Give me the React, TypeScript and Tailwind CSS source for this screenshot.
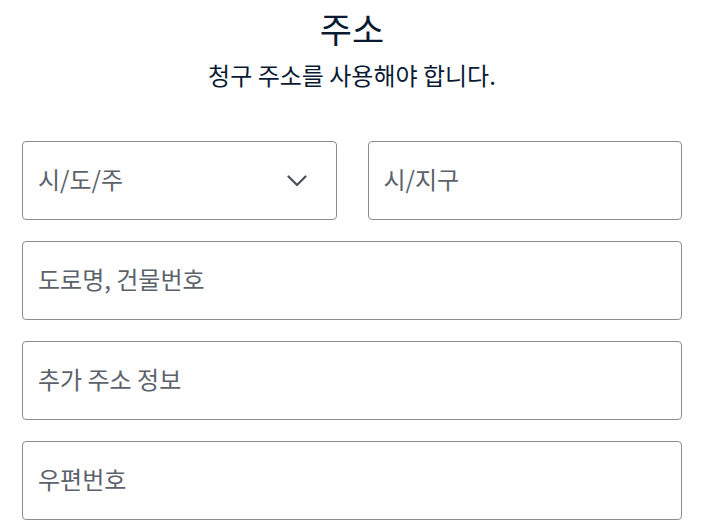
import React from "react";

const font = { fontFamily: '"Noto Sans CJK KR", "Noto Sans", sans-serif' };

function Field({ label, chevron = false }: { label: string; chevron?: boolean }) {
  return (
    <div className="flex h-[79px] items-center justify-between rounded-[4px] border border-[#8c8c8c] bg-white pl-[15px] pr-[29px]">
      <span className="mb-[3px] text-[24px] leading-none text-[#5b626b]">{label}</span>
      {chevron && (
        <svg width="20" height="12" viewBox="0 0 20 12" fill="none">
          <path d="M1.5 1.5 L10 10 L18.5 1.5" stroke="#4a5058" strokeWidth="2.2" strokeLinecap="round" strokeLinejoin="round" />
        </svg>
      )}
    </div>
  );
}

export default function App() {
  return (
    <div className="min-h-[529px] w-[712px] bg-white" style={font}>
      <div className="ml-[22px] flex w-[660px] flex-col">
        <h1 className="mt-[6px] text-center text-[35px] font-normal leading-[44px] text-[#0b1a33]">주소</h1>
        <p className="mt-[10px] text-center text-[24px] leading-[30px] text-[#0b1a33]">청구 주소를 사용해야 합니다.</p>
        <div className="mt-[51px] flex flex-col gap-[21px]">
          <div className="grid grid-cols-2 gap-[31px]">
            <Field label="시/도/주" chevron />
            <Field label="시/지구" />
          </div>
          <Field label="도로명, 건물번호" />
          <Field label="추가 주소 정보" />
          <Field label="우편번호" />
        </div>
      </div>
    </div>
  );
}
